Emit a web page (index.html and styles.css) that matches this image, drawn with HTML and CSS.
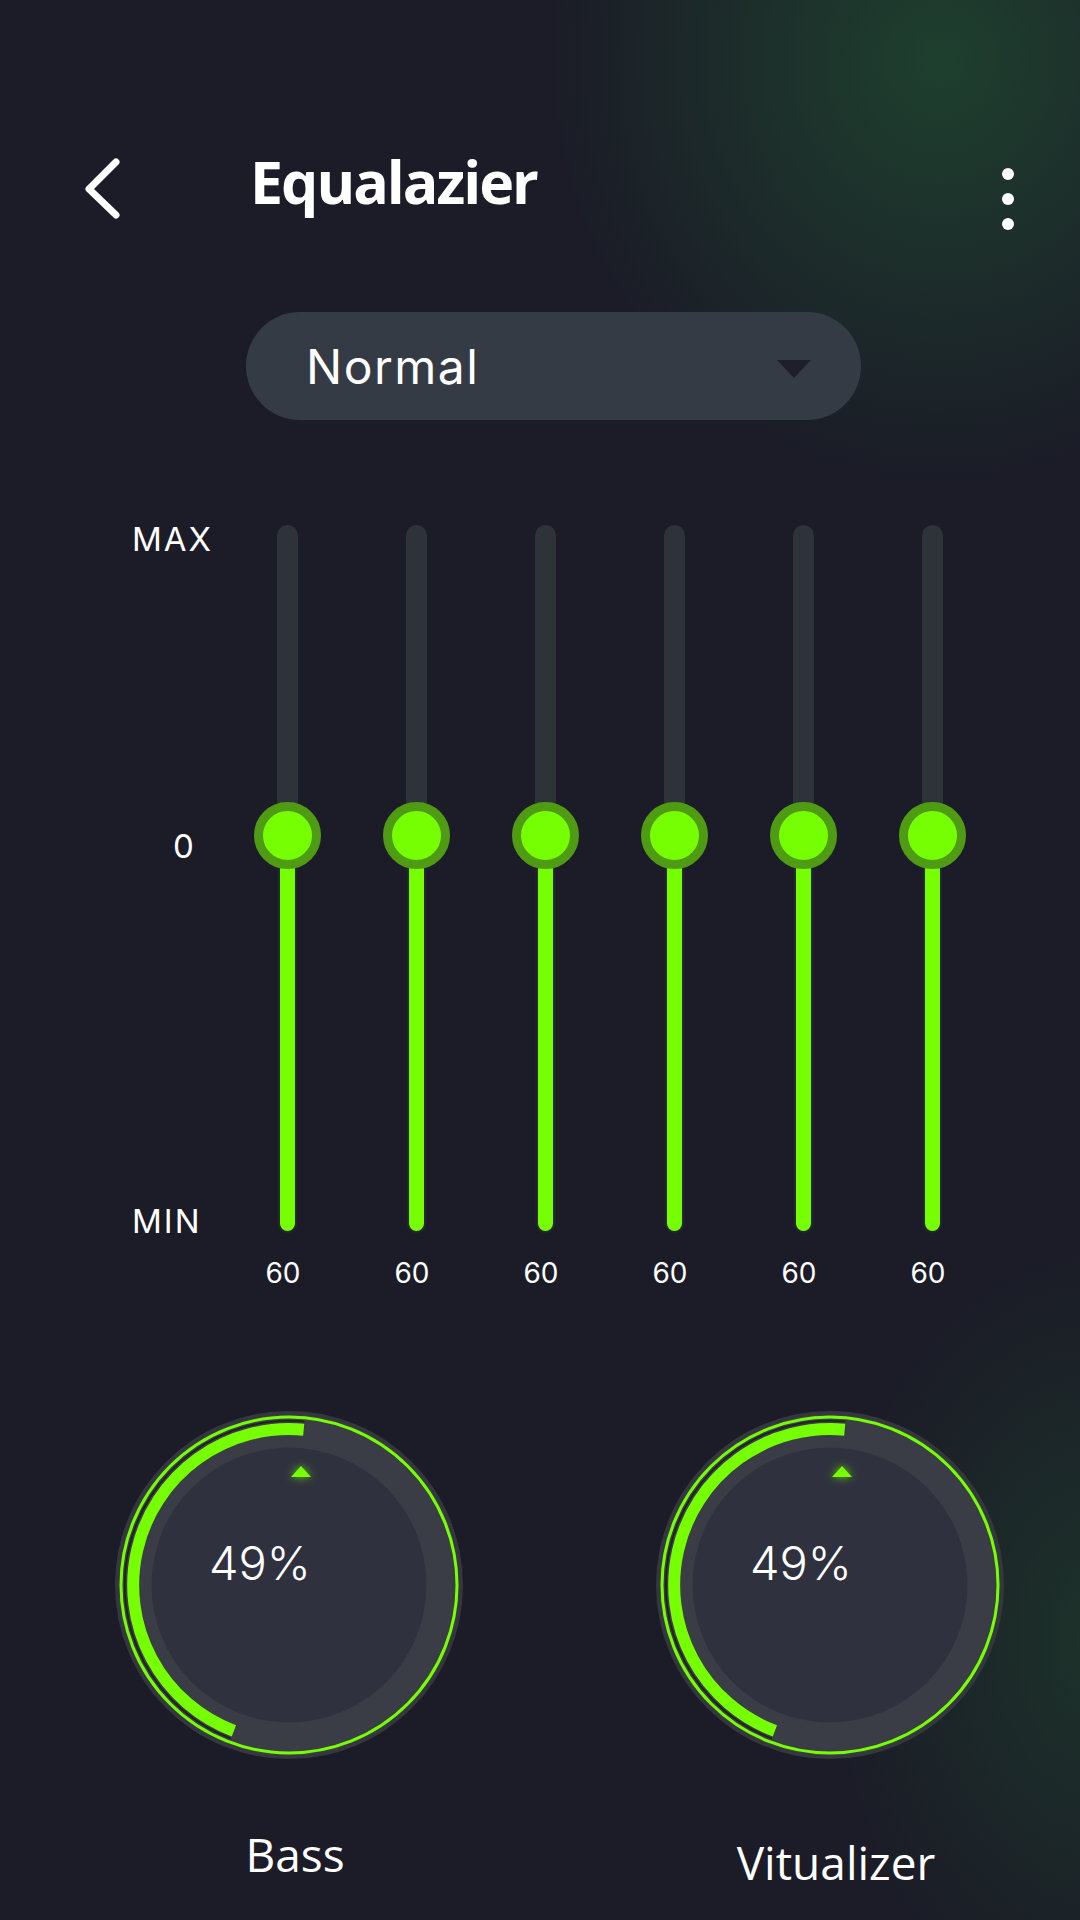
FILE: index.html
```html
<!DOCTYPE html>
<html lang="en">
<head>
<meta charset="utf-8">
<title>Equalazier</title>
<link rel="stylesheet" href="styles.css">
</head>
<body>
<div class="screen">
  <header class="topbar">
    <svg class="back" viewBox="0 0 40 64" width="40" height="64"><polyline points="34,6 7,33 34,59"/></svg>
    <h1 class="title">Equalazier</h1>
    <div class="more"><span></span><span></span><span></span></div>
  </header>

  <div class="preset">
    <span class="preset-name">Normal</span>
    <span class="caret"></span>
  </div>

  <section class="eq">
    <div class="scale">
      <span class="scale-max">MAX</span>
      <span class="scale-zero">0</span>
      <span class="scale-min">MIN</span>
    </div>
    <div class="band"><div class="slider"><div class="track"></div><div class="fill"></div><div class="thumb"></div></div><span class="freq">60</span></div>
    <div class="band"><div class="slider"><div class="track"></div><div class="fill"></div><div class="thumb"></div></div><span class="freq">60</span></div>
    <div class="band"><div class="slider"><div class="track"></div><div class="fill"></div><div class="thumb"></div></div><span class="freq">60</span></div>
    <div class="band"><div class="slider"><div class="track"></div><div class="fill"></div><div class="thumb"></div></div><span class="freq">60</span></div>
    <div class="band"><div class="slider"><div class="track"></div><div class="fill"></div><div class="thumb"></div></div><span class="freq">60</span></div>
    <div class="band"><div class="slider"><div class="track"></div><div class="fill"></div><div class="thumb"></div></div><span class="freq">60</span></div>
  </section>

  <section class="knobs">
    <div class="knob-col">
      <div class="knob">
        <svg viewBox="0 0 348 348" width="348" height="348">
          <circle cx="174" cy="174" r="174" fill="#35373e"/>
          <circle cx="174" cy="174" r="170.5" fill="#3b3d46"/>
          <circle cx="174" cy="174" r="168" fill="none" stroke="#76ff03" stroke-width="3"/>
          <path d="M 116.0 327.6 A 164.2 164.2 0 0 1 189.4 10.5" fill="none" stroke="#1f2128" stroke-width="1.6"/>
          <path d="M 118.9 319.9 A 156 156 0 0 1 188.7 18.7" fill="none" stroke="#76ff03" stroke-width="12"/>
          <circle cx="174" cy="174" r="137.5" fill="#2f323e"/>
          <polygon class="tri" points="186,55 176,66 196,66" fill="#76ff03"/>
        </svg>
        <span class="knob-value">49%</span>
      </div>
      <span class="knob-label">Bass</span>
    </div>
    <div class="knob-col">
      <div class="knob">
        <svg viewBox="0 0 348 348" width="348" height="348">
          <circle cx="174" cy="174" r="174" fill="#35373e"/>
          <circle cx="174" cy="174" r="170.5" fill="#3b3d46"/>
          <circle cx="174" cy="174" r="168" fill="none" stroke="#76ff03" stroke-width="3"/>
          <path d="M 116.0 327.6 A 164.2 164.2 0 0 1 189.4 10.5" fill="none" stroke="#1f2128" stroke-width="1.6"/>
          <path d="M 118.9 319.9 A 156 156 0 0 1 188.7 18.7" fill="none" stroke="#76ff03" stroke-width="12"/>
          <circle cx="174" cy="174" r="137.5" fill="#2f323e"/>
          <polygon class="tri" points="186,55 176,66 196,66" fill="#76ff03"/>
        </svg>
        <span class="knob-value">49%</span>
      </div>
      <span class="knob-label knob-label-low">Vitualizer</span>
    </div>
  </section>
</div>
</body>
</html>
```

FILE: styles.css
```css
html, body {
  margin: 0;
  padding: 0;
  background: #1b1c27;
}

.screen {
  width: 1080px;
  height: 1920px;
  overflow: hidden;
  color: #ffffff;
  font-family: "Inter", "Open Sans", sans-serif;
  background:
    radial-gradient(ellipse 520px 560px at 940px 60px, rgba(31, 72, 48, 0.8), rgba(31, 72, 48, 0) 75%),
    radial-gradient(ellipse 360px 520px at 1100px 1640px, rgba(30, 66, 44, 0.6), rgba(30, 66, 44, 0) 75%),
    #1b1c27;
}

/* header */
.topbar {
  display: flex;
  align-items: flex-start;
  height: 312px;
}

.back {
  flex: none;
  margin-left: 82px;
  margin-top: 156px;
}

.back polyline {
  fill: none;
  stroke: #ffffff;
  stroke-width: 7;
  stroke-linecap: round;
  stroke-linejoin: round;
}

.title {
  margin: 152px 0 0 128px;
  font-family: "Open Sans", sans-serif;
  font-weight: 700;
  font-size: 59px;
  line-height: 1;
  letter-spacing: -2px;
}

.more {
  display: flex;
  flex-direction: column;
  gap: 13px;
  margin-left: auto;
  margin-right: 66px;
  margin-top: 168px;
}

.more span {
  width: 12px;
  height: 12px;
  border-radius: 50%;
  background: #ffffff;
}

/* preset dropdown */
.preset {
  display: flex;
  align-items: center;
  justify-content: space-between;
  box-sizing: border-box;
  width: 615px;
  height: 108px;
  margin-left: 246px;
  padding: 0 50px 0 60px;
  border-radius: 54px;
  background: #353b45;
}

.preset-name {
  font-size: 48px;
  font-weight: 400;
  letter-spacing: 1.5px;
  color: #ffffff;
}

.caret {
  width: 0;
  height: 0;
  margin-top: 5px;
  border-left: 17.5px solid transparent;
  border-right: 17.5px solid transparent;
  border-top: 18px solid #1e2029;
}

/* equalizer */
.eq {
  display: flex;
  margin-top: 105px;
  padding-left: 132px;
}

.scale {
  display: flex;
  flex-direction: column;
  align-items: flex-start;
  width: 90.5px;
  height: 706px;
  font-size: 33px;
  font-weight: 400;
  line-height: 33px;
  letter-spacing: 2px;
}

.scale-max { margin-top: -2.5px; }
.scale-zero { margin-top: 274px; margin-left: 41px; }
.scale-min { margin-top: 342px; }

.band {
  display: flex;
  flex-direction: column;
  align-items: center;
  width: 129px;
}

.slider {
  position: relative;
  display: flex;
  flex-direction: column;
  align-items: center;
  width: 67px;
  height: 706px;
}

.track {
  width: 21px;
  height: 310px;
  border-radius: 10.5px 10.5px 0 0;
  background: #2e3239;
}

.fill {
  width: 15px;
  height: 396px;
  border-radius: 0 0 7.5px 7.5px;
  background: #76ff03;
  box-shadow: 0 0 3px 1px rgba(70, 76, 88, 0.5);
}

.thumb {
  position: absolute;
  left: 0;
  top: 276.5px;
  box-sizing: border-box;
  width: 67px;
  height: 67px;
  border-radius: 50%;
  border: 9px solid #4f9c14;
  background: #76ff03;
}

.freq {
  margin-top: 28px;
  padding-right: 8px;
  font-size: 28px;
  line-height: 28px;
  font-weight: 400;
}

/* knobs */
.knobs {
  display: flex;
  gap: 193px;
  margin-top: 124px;
  padding-left: 115px;
}

.knob-col {
  display: flex;
  flex-direction: column;
  align-items: center;
  width: 348px;
}

.knob {
  position: relative;
  width: 348px;
  height: 348px;
}

.knob svg {
  display: block;
}

.tri {
  filter: drop-shadow(0 0 4px rgba(118, 255, 3, 0.8));
}

.knob-value {
  position: absolute;
  left: 94px;
  top: 127.5px;
  font-size: 47px;
  line-height: 47px;
  font-weight: 300;
}

.knob-label {
  margin-top: 72px;
  padding-left: 12px;
  font-family: "Open Sans", sans-serif;
  font-size: 46px;
  line-height: 46px;
  font-weight: 400;
}

.knob-label-low {
  margin-top: 80px;
}
```
